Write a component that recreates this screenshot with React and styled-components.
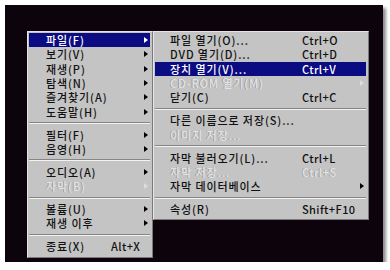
import React from 'react';
import styled, { createGlobalStyle } from 'styled-components';

const GlobalStyle = createGlobalStyle`
    html, body {
        margin: 0;
        padding: 0;
        background: #ffffff;
    }
    body {
        font-family: "Noto Sans CJK KR", "Noto Sans", sans-serif;
    }
`;

const mainItems = [
    { label: '파일(F)', arrow: true, active: true },
    { label: '보기(V)', arrow: true },
    { label: '재생(P)', arrow: true },
    { label: '탐색(N)', arrow: true },
    { label: '즐겨찾기(A)', arrow: true },
    { label: '도움말(H)', arrow: true },
    { sep: true },
    { label: '필터(F)', arrow: true },
    { label: '음영(H)', arrow: true },
    { sep: true },
    { label: '오디오(A)', arrow: true },
    { label: '자막(B)', arrow: true, disabled: true },
    { sep: true },
    { label: '볼륨(U)', arrow: true },
    { label: '재생 이후', arrow: true },
    { sep: true },
    { label: '종료(X)', shortcut: 'Alt+X' },
];

const fileItems = [
    { label: '파일 열기(O)...', shortcut: 'Ctrl+O' },
    { label: 'DVD 열기(D)...', shortcut: 'Ctrl+D' },
    { label: '장치 열기(V)...', shortcut: 'Ctrl+V', active: true },
    { label: 'CD-ROM 열기(M)', arrow: true, disabled: true },
    { label: '닫기(C)', shortcut: 'Ctrl+C' },
    { sep: true },
    { label: '다른 이름으로 저장(S)...' },
    { label: '이미지 저장...', disabled: true },
    { sep: true },
    { label: '자막 불러오기(L)...', shortcut: 'Ctrl+L' },
    { label: '자막 저장...', shortcut: 'Ctrl+S', disabled: true },
    { label: '자막 데이터베이스', arrow: true },
    { sep: true },
    { label: '속성(R)', shortcut: 'Shift+F10' },
];

const Menu = ({ items, width, indent, labelWidth }) => (
    <MenuBox width={width}>
        {items.map((item, i) => {
            if (item.sep) {
                return <Separator key={i} />;
            }
            return (
                <Row key={i} $active={item.active} $disabled={item.disabled} indent={indent}>
                    <Label labelWidth={labelWidth}>{item.label}</Label>
                    {item.shortcut && <Shortcut>{item.shortcut}</Shortcut>}
                    {item.arrow && <Arrow $active={item.active} $disabled={item.disabled} />}
                </Row>
            );
        })}
    </MenuBox>
);

const App = () => {
    return (
        <>
            <GlobalStyle />
            <Screen>
                <Menu items={mainItems} width={126} indent={17} labelWidth={65} />
                <Menu items={fileItems} width={216} indent={15} labelWidth={132} />
            </Screen>
        </>
    );
}

export default App;

const Screen = styled.div`
    display: flex;
    align-items: flex-start;
    box-sizing: border-box;
    margin: 5px 0 0 5px;
    width: 378px;
    height: 257px;
    padding: 26px 0 0 22px;
    background-color: #0d030d;
    box-shadow: 3px 3px 3px rgba(0, 0, 0, 0.45);
`;

const MenuBox = styled.div`
    box-sizing: border-box;
    width: ${props => props.width}px;
    padding: 1px 2px 3px 1px;
    background-color: #c4c4c4;
    border-top: 1px solid #e4e4e4;
    border-left: 1px solid #e4e4e4;
    border-right: 1px solid #7a7a7a;
    border-bottom: 1px solid #7a7a7a;
`;

const Row = styled.div`
    display: flex;
    align-items: center;
    height: 14.3px;
    padding: 0 2px 0 ${props => props.indent}px;
    font-size: 11px;
    line-height: 14px;
    font-weight: 500;
    letter-spacing: 0.9px;
    white-space: nowrap;
    overflow: hidden;
    background-color: ${props => (props.$active ? '#0b0b82' : 'transparent')};
    color: ${props => (props.$active ? '#ffffff' : props.$disabled ? '#e2e2e2' : '#111111')};
    text-shadow: ${props => (props.$disabled ? '-1px 0 0 #9a9a9a' : 'none')};
`;

const Label = styled.span`
    display: block;
    height: 14px;
    overflow: hidden;
    width: ${props => props.labelWidth}px;
    flex-shrink: 0;
`;

const Shortcut = styled.span`
    display: block;
    height: 14px;
    overflow: hidden;
    letter-spacing: 0.4px;
`;

const Arrow = styled.span`
    margin-left: auto;
    width: 0;
    height: 0;
    border-top: 3.5px solid transparent;
    border-bottom: 3.5px solid transparent;
    border-left: 4px solid ${props => (props.$active ? '#ffffff' : props.$disabled ? '#dcdcdc' : '#000000')};
`;

const Separator = styled.div`
    height: 8.7px;
    display: flex;
    flex-direction: column;
    justify-content: center;

    &::before {
        content: '';
        display: block;
        height: 1px;
        background-color: #858585;
    }
    &::after {
        content: '';
        display: block;
        height: 1px;
        background-color: #f2f2f2;
    }
`;
